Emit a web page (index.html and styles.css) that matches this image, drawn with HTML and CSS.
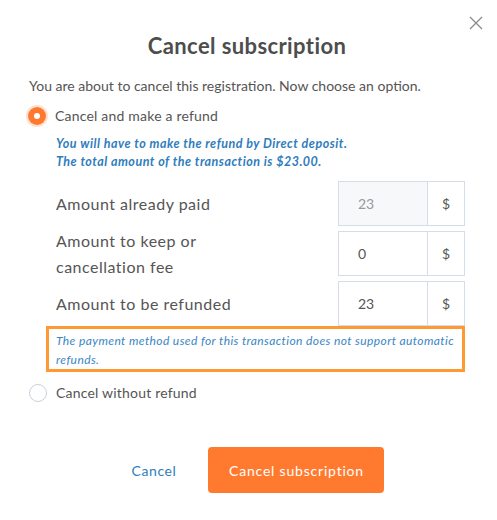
FILE: index.html
```html
<!DOCTYPE html>
<html>
<head>
<meta charset="utf-8">
<link rel="stylesheet" href="styles.css">
</head>
<body>
<div class="modal">
  <button class="close" aria-label="Close">
    <svg width="14" height="14" viewBox="0 0 14 14"><path d="M1 1L13 13M13 1L1 13" stroke="#8a8a8a" stroke-width="1.3" fill="none"/></svg>
  </button>
  <h1 class="title">Cancel subscription</h1>
  <p class="intro">You are about to cancel this registration. Now choose an option.</p>

  <label class="option">
    <span class="radio checked"></span>
    <span>Cancel and make a refund</span>
  </label>
  <div class="details">
    <p class="notice">You will have to make the refund by Direct deposit.<br>The total amount of the transaction is $23.00.</p>

    <div class="rows">
      <div class="row">
        <div class="row-label">Amount already paid</div>
        <div class="group">
          <div class="field disabled">23</div>
          <div class="addon">$</div>
        </div>
      </div>
      <div class="row">
        <div class="row-label">Amount to keep or<br>cancellation fee</div>
        <div class="group">
          <div class="field">0</div>
          <div class="addon">$</div>
        </div>
      </div>
      <div class="row">
        <div class="row-label">Amount to be refunded</div>
        <div class="group">
          <div class="field">23</div>
          <div class="addon">$</div>
        </div>
      </div>
    </div>
  </div>
  <div class="warning">The payment method used for this transaction does not support automatic refunds.</div>

  <label class="option second">
    <span class="radio"></span>
    <span>Cancel without refund</span>
  </label>

  <div class="actions">
    <button class="link">Cancel</button>
    <button class="primary">Cancel subscription</button>
  </div>
</div>
</body>
</html>
```

FILE: styles.css
```css
* { box-sizing: border-box; }
html, body { margin: 0; padding: 0; background: #fff; }
body { font-family: "Lato", "Noto Sans", sans-serif; color: #555; }

.modal {
  position: relative;
  width: 497px;
  height: 520px;
  padding: 32px 32px 0 29px;
}

.close {
  position: absolute;
  top: 16px;
  right: 14px;
  border: 0;
  background: none;
  padding: 0;
  width: 14px;
  height: 14px;
  cursor: pointer;
}
.close svg { display: block; }

.title {
  margin: 0;
  text-align: center;
  font-size: 22px;
  line-height: 28px;
  font-weight: 700;
  color: #4d4d4d;
  letter-spacing: 0.4px;
}

.intro {
  margin: 16px 0 0 0;
  font-size: 14px;
  line-height: 20px;
  color: #555;
}

.option {
  display: flex;
  align-items: center;
  gap: 9px;
  font-size: 14px;
  line-height: 20px;
  color: #555;
  letter-spacing: 0.2px;
  margin-top: 10px;
  margin-left: -1px;
}
.option.second { margin-top: 11px; margin-left: 0; }

.radio {
  width: 18px;
  height: 18px;
  border-radius: 50%;
  border: 1px solid #c9d1dc;
  background: #fff;
  flex: none;
  position: relative;
}
.radio.checked {
  border: 0;
  background: #ff7a2f;
  box-shadow: 0 0 0 2px #ffe1cf;
}
.radio.checked::after {
  content: "";
  position: absolute;
  left: 6px;
  top: 6px;
  width: 6px;
  height: 6px;
  border-radius: 50%;
  background: #fff;
}

.details { padding-left: 27px; }

.notice {
  margin: 9px 0 0 0;
  font-size: 12.5px;
  line-height: 18px;
  font-weight: 700;
  font-style: italic;
  letter-spacing: 0.5px;
  color: #2f7dbd;
}

.rows {
  display: flex;
  flex-direction: column;
  gap: 5px;
  margin-top: 10px;
}

.row {
  display: flex;
  align-items: center;
  justify-content: space-between;
  height: 45px;
}

.row-label {
  font-size: 16px;
  line-height: 26px;
  color: #555;
  letter-spacing: 0.5px;
}

.group {
  display: flex;
  width: 127px;
  height: 45px;
}
.field {
  width: 89px;
  border: 1px solid #d5dde8;
  border-right: 0;
  display: flex;
  align-items: center;
  padding-left: 19px;
  font-size: 14px;
  color: #555;
}
.field.disabled { background: #f6f8fa; color: #999; }
.addon {
  flex: 1;
  border: 1px solid #d5dde8;
  display: flex;
  align-items: center;
  justify-content: center;
  font-size: 14px;
  color: #555;
}

.warning {
  margin-left: 17px;
  border: 3px solid #ff9933;
  padding: 2px 2px 0 7px;
  font-size: 12px;
  line-height: 19px;
  font-style: italic;
  letter-spacing: 0.4px;
  color: #3a86c4;
}

.actions {
  display: flex;
  justify-content: center;
  align-items: center;
  gap: 32px;
  margin-top: 44px;
  padding-left: 22px;
}
.link {
  border: 0;
  background: none;
  font-family: inherit;
  font-size: 14px;
  color: #2f7dbd;
  letter-spacing: 0.6px;
  padding: 0;
  cursor: pointer;
}
.primary {
  border: 0;
  background: #ff7a2f;
  color: #fff;
  font-family: inherit;
  font-size: 14px;
  letter-spacing: 0.8px;
  width: 176px;
  height: 46px;
  border-radius: 4px;
  cursor: pointer;
}
```
